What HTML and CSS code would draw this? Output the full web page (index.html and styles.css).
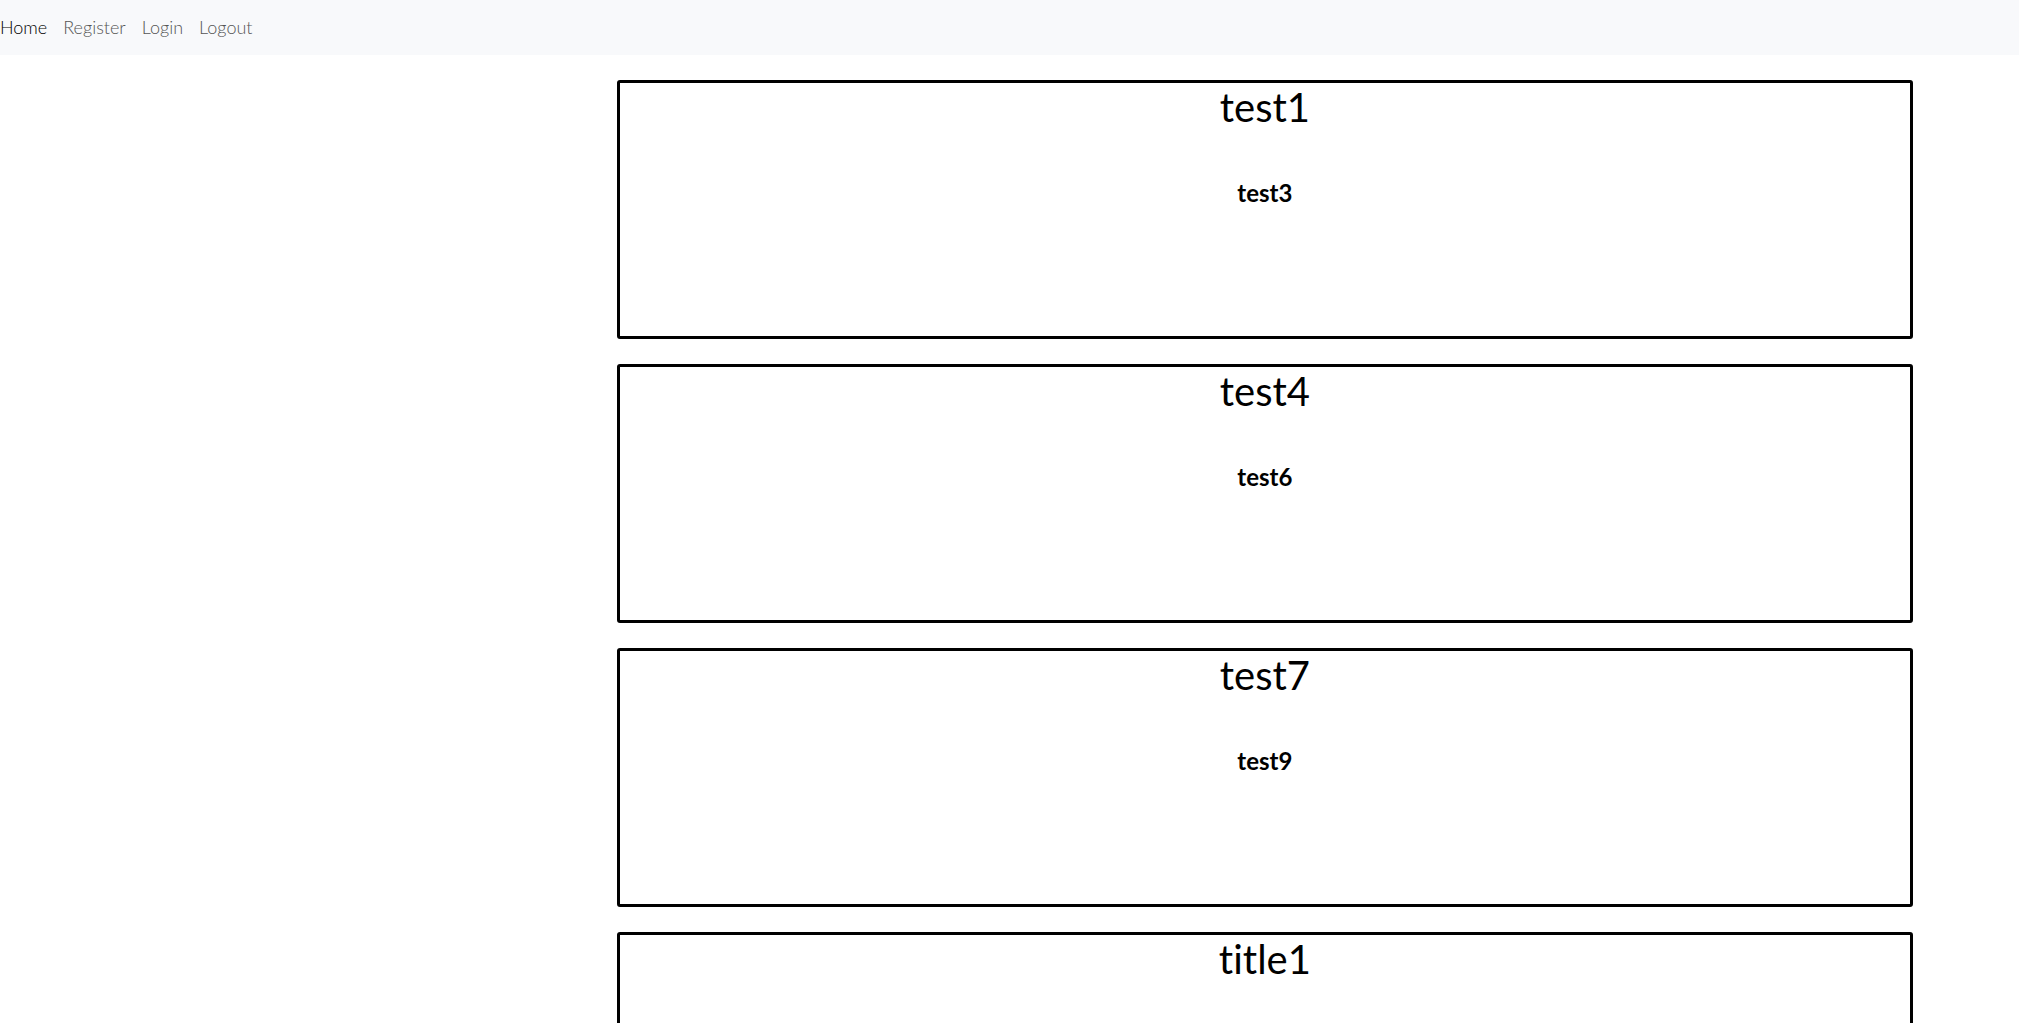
FILE: index.html
```html
<!DOCTYPE html>
<html lang="en">
<head>
<meta charset="utf-8">
<meta name="viewport" content="width=device-width, initial-scale=1">
<title>Home</title>
<link rel="stylesheet" href="styles.css">
</head>
<body>
<nav class="navbar">
  <a class="nav-link active" href="#">Home</a>
  <a class="nav-link" href="#">Register</a>
  <a class="nav-link" href="#">Login</a>
  <a class="nav-link" href="#">Logout</a>
</nav>
<main class="posts">
  <article class="post">
    <h1 class="post-title">test1</h1>
    <p class="post-body">test3</p>
  </article>
  <article class="post">
    <h1 class="post-title">test4</h1>
    <p class="post-body">test6</p>
  </article>
  <article class="post">
    <h1 class="post-title">test7</h1>
    <p class="post-body">test9</p>
  </article>
  <article class="post">
    <h1 class="post-title">title1</h1>
  </article>
</main>
</body>
</html>
```
FILE: styles.css
```css
* {
  box-sizing: border-box;
}

html {
  scrollbar-width: none;
}

body {
  margin: 0;
  background: #fff;
  color: #000;
  font-family: "Century Gothic", Lato, sans-serif;
  font-variant-ligatures: none;
}

.navbar {
  display: flex;
  gap: 16px;
  padding: 15px 0 16px;
  background: #f8f9fb;
}

.nav-link {
  color: #555;
  font-size: 18px;
  font-weight: 300;
  line-height: 24px;
  text-decoration: none;
}

.nav-link.active {
  color: #000;
}

.posts {
  display: grid;
  gap: 25px;
  width: 64.2%;
  margin: 25px 0 25px 30.55%;
}

.post {
  min-height: 259px;
  border: 3px solid #000;
  border-radius: 3px;
  text-align: center;
}

.post-title {
  margin: 0;
  font-size: 40px;
  font-weight: 400;
  line-height: 48px;
}

.post-body {
  margin: 44px 0 0;
  font-size: 24px;
  font-weight: 700;
  line-height: 36px;
}
```
